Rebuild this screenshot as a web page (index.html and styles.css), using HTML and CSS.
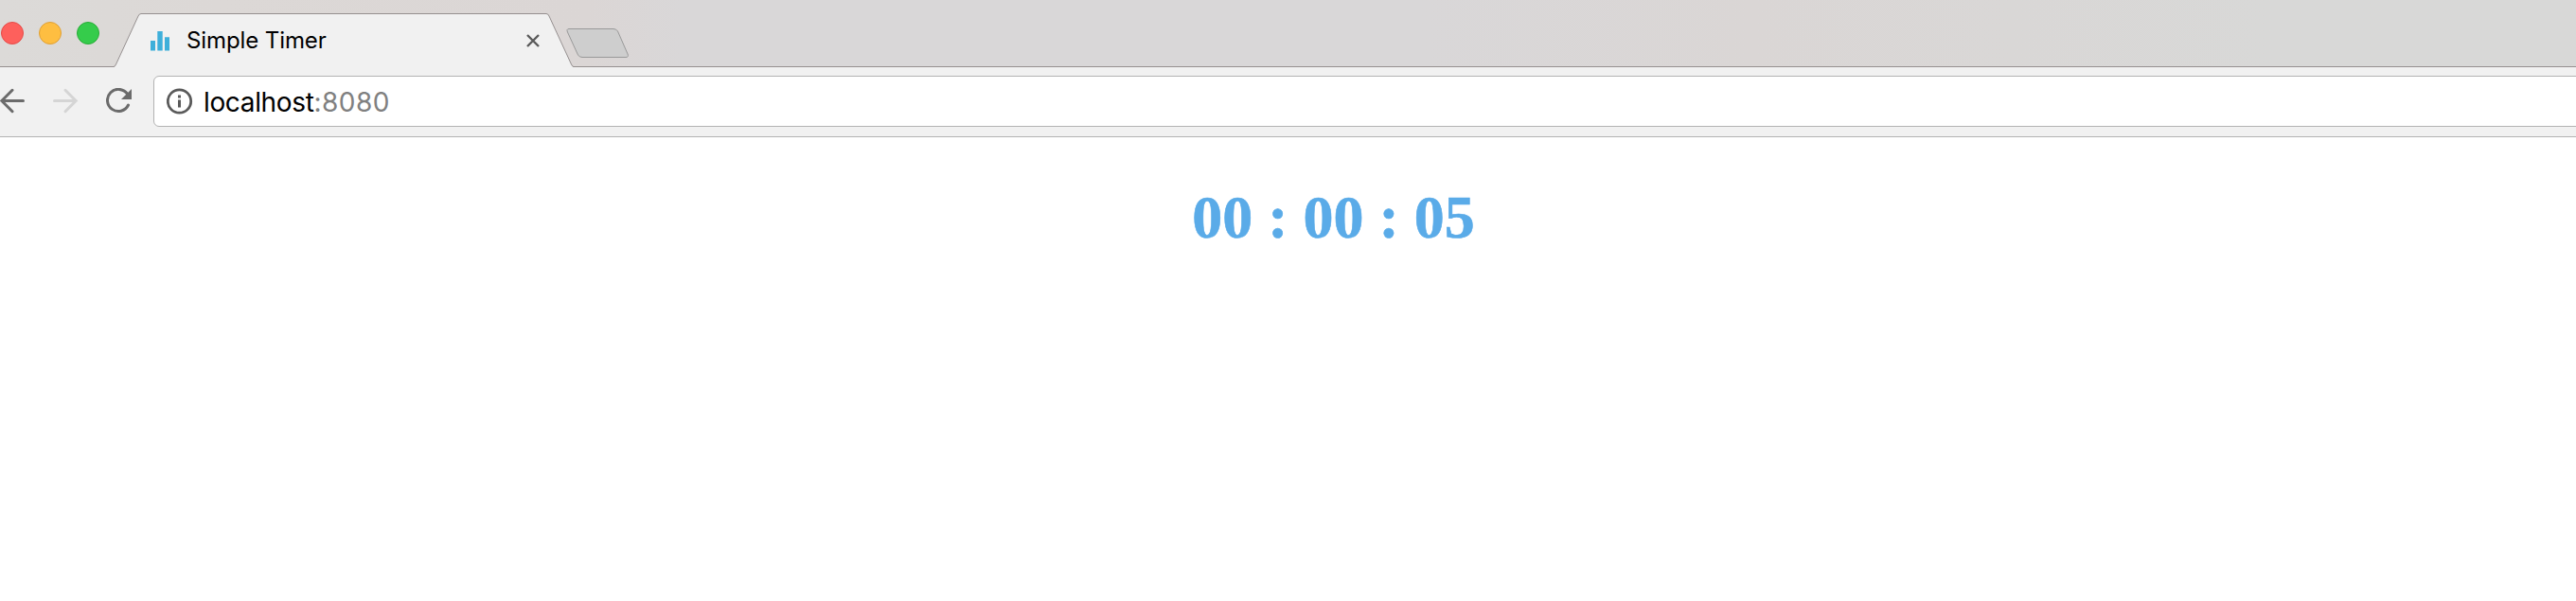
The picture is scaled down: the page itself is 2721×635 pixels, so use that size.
FILE: index.html
```html
<!DOCTYPE html>
<html lang="en">
<head>
<meta charset="utf-8">
<title>Simple Timer</title>
<link rel="stylesheet" href="styles.css">
</head>
<body>
<div class="browser">
  <header class="tab-strip">
    <div class="window-controls">
      <span class="control close"></span>
      <span class="control minimize"></span>
      <span class="control zoom"></span>
    </div>
    <div class="tab">
      <svg class="tab-shape" width="486" height="57" viewBox="0 0 486 57">
        <path class="tab-fill" d="M0 57Q1.500 56.500 2.500 54L26 3Q27 .500 29 .500H457Q459 .500 460 3L483.500 54Q484.500 56.500 486 57Z"/>
        <path class="tab-line" d="M0 56.500Q1.500 56.500 2.500 54L26 3Q27 .500 29 .500H457Q459 .500 460 3L483.500 54Q484.500 56.500 486 56.500"/>
      </svg>
      <div class="tab-content">
        <svg class="favicon" width="21" height="21" viewBox="0 0 21 21">
          <path d="M0 10h5v10.500H0zM7.300 0h5.400v20.500H7.300zM15 6.300h5v14.200h-5z"/>
        </svg>
        <span class="tab-title">Simple Timer</span>
        <svg class="tab-close" width="14" height="14" viewBox="0 0 14 14"><path d="M1 1L13 13M13 1L1 13"/></svg>
      </div>
    </div>
    <svg class="new-tab" width="67" height="32" viewBox="0 0 67 32">
      <path d="M3 .500H50Q53 .500 54.500 3L65 27Q66.500 30.500 63 30.500H17Q14 30.500 12.500 28L1.500 4Q0 .500 3 .500Z"/>
    </svg>
  </header>
  <nav class="toolbar">
    <svg class="icon back" width="27" height="27" viewBox="0 0 27 27"><path d="M24.500 13.500H2M13 2.300L1.800 13.500L13 24.700"/></svg>
    <svg class="icon forward" width="27" height="27" viewBox="0 0 27 27"><path d="M1.500 13.500H24M13 2.300L24.200 13.500L13 24.700"/></svg>
    <svg class="icon reload" width="28" height="27" viewBox="0 0 28 27">
      <path d="M22.500 6.200A11.600 11.600 0 1 0 23.500 18"/>
      <path class="reload-head" d="M27 1V12H16Z"/>
    </svg>
    <div class="address-bar">
      <svg class="info" width="28" height="28" viewBox="0 0 28 28">
        <circle cx="13.500" cy="14" r="12.200"/>
        <path d="M12 7.500h3v3h-3zM12 12.500h3v8h-3z"/>
      </svg>
      <span class="url"><span class="host">localhost</span><span class="port">:8080</span></span>
    </div>
  </nav>
  <main class="page">
    <h1 class="timer">00 : 00 : 05</h1>
  </main>
</div>
</body>
</html>
```
FILE: styles.css
```css
* { box-sizing: border-box; }
body { margin: 0; background: #fff; overflow: hidden; }
svg { display: block; flex: none; }

.browser { width: 100%; height: 635px; overflow: hidden; font-family: Inter, "Liberation Sans", sans-serif; }

.tab-strip {
  display: flex;
  height: 71px;
  background: linear-gradient(90deg, #dcdad8 0, #dcd8d6 230px, #dbd6d5 620px, #d9d7d8 720px, #d9d7d8 1500px, #dad6d5 1850px, #d8d8d7 2400px, #d8d8d7 100%);
  border-bottom: 1px solid #969090;
}

.window-controls { display: flex; gap: 16px; width: 120px; padding: 23px 0 0 1px; flex: none; }
.control { width: 24px; height: 24px; border-radius: 50%; border: 1px solid; flex: none; }
.close { background: #fe605c; border-color: #e64b48; }
.minimize { background: #febe41; border-color: #dfa036; }
.zoom { background: #35cc4b; border-color: #29ac37; }

.tab { display: grid; width: 486px; height: 57px; margin-top: 14px; flex: none; }
.tab-shape, .tab-content { grid-area: 1 / 1; }
.tab-fill { fill: #f1f1f1; }
.tab-line { fill: none; stroke: #969090; }
.tab-content { display: flex; align-items: flex-start; padding-left: 39px; }
.favicon { margin-top: 19px; fill: #3eafda; }
.tab-title { width: 359px; margin-left: 17px; padding-top: 13px; font-size: 24px; line-height: 32px; letter-spacing: -0.1px; color: #000; white-space: nowrap; }
.tab-close { margin-top: 22px; stroke: #5a5a5a; stroke-width: 2.4; }
.new-tab { margin: 30px 0 0 -8px; fill: #cecece; stroke: #999; }

.toolbar {
  display: flex;
  height: 74px;
  background: #f1f1f1;
  border-bottom: 1px solid #b3b3b3;
}
.icon { margin-top: 22px; fill: none; stroke: #6b6b6b; stroke-width: 3; stroke-linecap: round; }
.forward { margin-left: 29px; stroke: #d5d5d5; }
.reload { margin-left: 29px; }
.reload .reload-head { fill: #6b6b6b; stroke: none; }
.address-bar {
  display: flex;
  align-items: flex-start;
  flex: 1;
  height: 54px;
  margin: 9px -8px 0 22px;
  padding-left: 13px;
  background: #fff;
  border: 1px solid #b3b3b3;
  border-radius: 6px;
}
.info { margin-top: 12px; fill: #5a5a5a; }
.info circle { fill: none; stroke: #5a5a5a; stroke-width: 2.8; }
.url { margin-left: 11px; padding-top: 9px; font-size: 28px; line-height: 36px; white-space: nowrap; }
.host { color: #000; letter-spacing: -0.35px; }
.port { color: #808080; letter-spacing: 0.45px; }

.page { padding: 48px 0 0 96px; }
.timer { margin: 0; font: bold 64px/74px "Liberation Serif", "Times New Roman", serif; text-align: center; color: #5aabe8; -webkit-text-stroke: 0.6px #5aabe8; }
```
